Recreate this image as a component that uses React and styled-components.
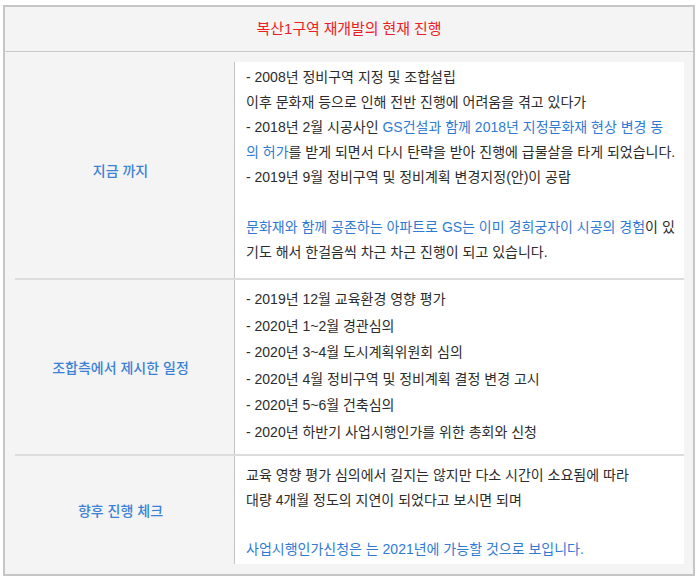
import React from "react";
import styled, { createGlobalStyle } from "styled-components";

const GlobalStyle = createGlobalStyle`
  html, body {
    margin: 0;
    padding: 0;
    background: #ffffff;
  }
  body {
    font-family: "Liberation Sans", "Noto Sans CJK KR", sans-serif;
  }
`;

const Frame = styled.div`
  width: 688px;
  margin: 5px 0 0 3px;
  border: 2px solid #c6c6c6;
  background: #f4f4f4;
`;

const Header = styled.div`
  height: 44px;
  border-bottom: 1px solid #c9c9c9;
  display: flex;
  align-items: center;
  justify-content: center;
`;

const Title = styled.h1`
  margin: 0;
  font-size: 15px;
  font-weight: normal;
  letter-spacing: -0.1px;
  color: #ee1c25;
  transform: translateY(-2px);
`;

const Body = styled.div`
  padding: 10px 9px 10px 10px;
`;

const Row = styled.div`
  display: grid;
  grid-template-columns: 220px 1fr;
  border-top: ${(p) => (p.$first ? "none" : "2px solid #dcdcdc")};
  min-height: ${(p) => p.$h}px;
`;

const Label = styled.div`
  display: flex;
  align-items: center;
  justify-content: center;
  border-right: 1px solid #c4c4c4;
  color: #3b82d6;
  font-size: 14px;
  font-weight: 500;
  padding-right: 8px;
`;

const Cell = styled.div`
  background: #ffffff;
  padding: ${(p) => p.$pt}px 4px 0 11px;
  font-size: 14px;
  line-height: ${(p) => p.$lh}px;
  color: #2c2c2c;
`;

const Line = styled.div`
  white-space: nowrap;
  min-height: ${(p) => p.$lh}px;
`;

const Blue = styled.span`
  color: #2f7bd3;
`;

export default function App() {
  return (
    <>
      <GlobalStyle />
      <Frame>
        <Header>
          <Title>복산1구역 재개발의 현재 진행</Title>
        </Header>
        <Body>
          <Row $first $h={216}>
            <Label>지금 까지</Label>
            <Cell $pt={3} $lh={25}>
              <Line>- 2008년 정비구역 지정 및 조합설립</Line>
              <Line>이후 문화재 등으로 인해 전반 진행에 어려움을 겪고 있다가</Line>
              <Line>
                - 2018년 2월 시공사인 <Blue>GS건설과 함께 2018년 지정문화재 현상 변경 동</Blue>
              </Line>
              <Line>
                <Blue>의 허가</Blue>를 받게 되면서 다시 탄략을 받아 진행에 급물살을 타게 되었습니다.
              </Line>
              <Line>- 2019년 9월 정비구역 및 정비계획 변경지정(안)이 공람</Line>
              <Line $lh={25} />
              <Line>
                <Blue>문화재와 함께 공존하는 아파트로 GS는 이미 경희궁자이 시공의 경험</Blue>이 있
              </Line>
              <Line>기도 해서 한걸음씩 차근 차근 진행이 되고 있습니다.</Line>
            </Cell>
          </Row>
          <Row $h={174}>
            <Label>조합측에서 제시한 일정</Label>
            <Cell $pt={6} $lh={26.5}>
              <Line>- 2019년 12월 교육환경 영향 평가</Line>
              <Line>- 2020년 1~2월 경관심의</Line>
              <Line>- 2020년 3~4월 도시계획위원회 심의</Line>
              <Line>- 2020년 4월 정비구역 및 정비계획 결정 변경 고시</Line>
              <Line>- 2020년 5~6월 건축심의</Line>
              <Line>- 2020년 하반기 사업시행인가를 위한 총회와 신청</Line>
            </Cell>
          </Row>
          <Row $h={108}>
            <Label>향후 진행 체크</Label>
            <Cell $pt={7} $lh={24.5}>
              <Line>교육 영향 평가 심의에서 길지는 않지만 다소 시간이 소요됨에 따라</Line>
              <Line>대량 4개월 정도의 지연이 되었다고 보시면 되며</Line>
              <Line $lh={24.5} />
              <Line>
                <Blue>사업시행인가신청은 는 2021년에 가능할 것으로 보입니다.</Blue>
              </Line>
            </Cell>
          </Row>
        </Body>
      </Frame>
    </>
  );
}
